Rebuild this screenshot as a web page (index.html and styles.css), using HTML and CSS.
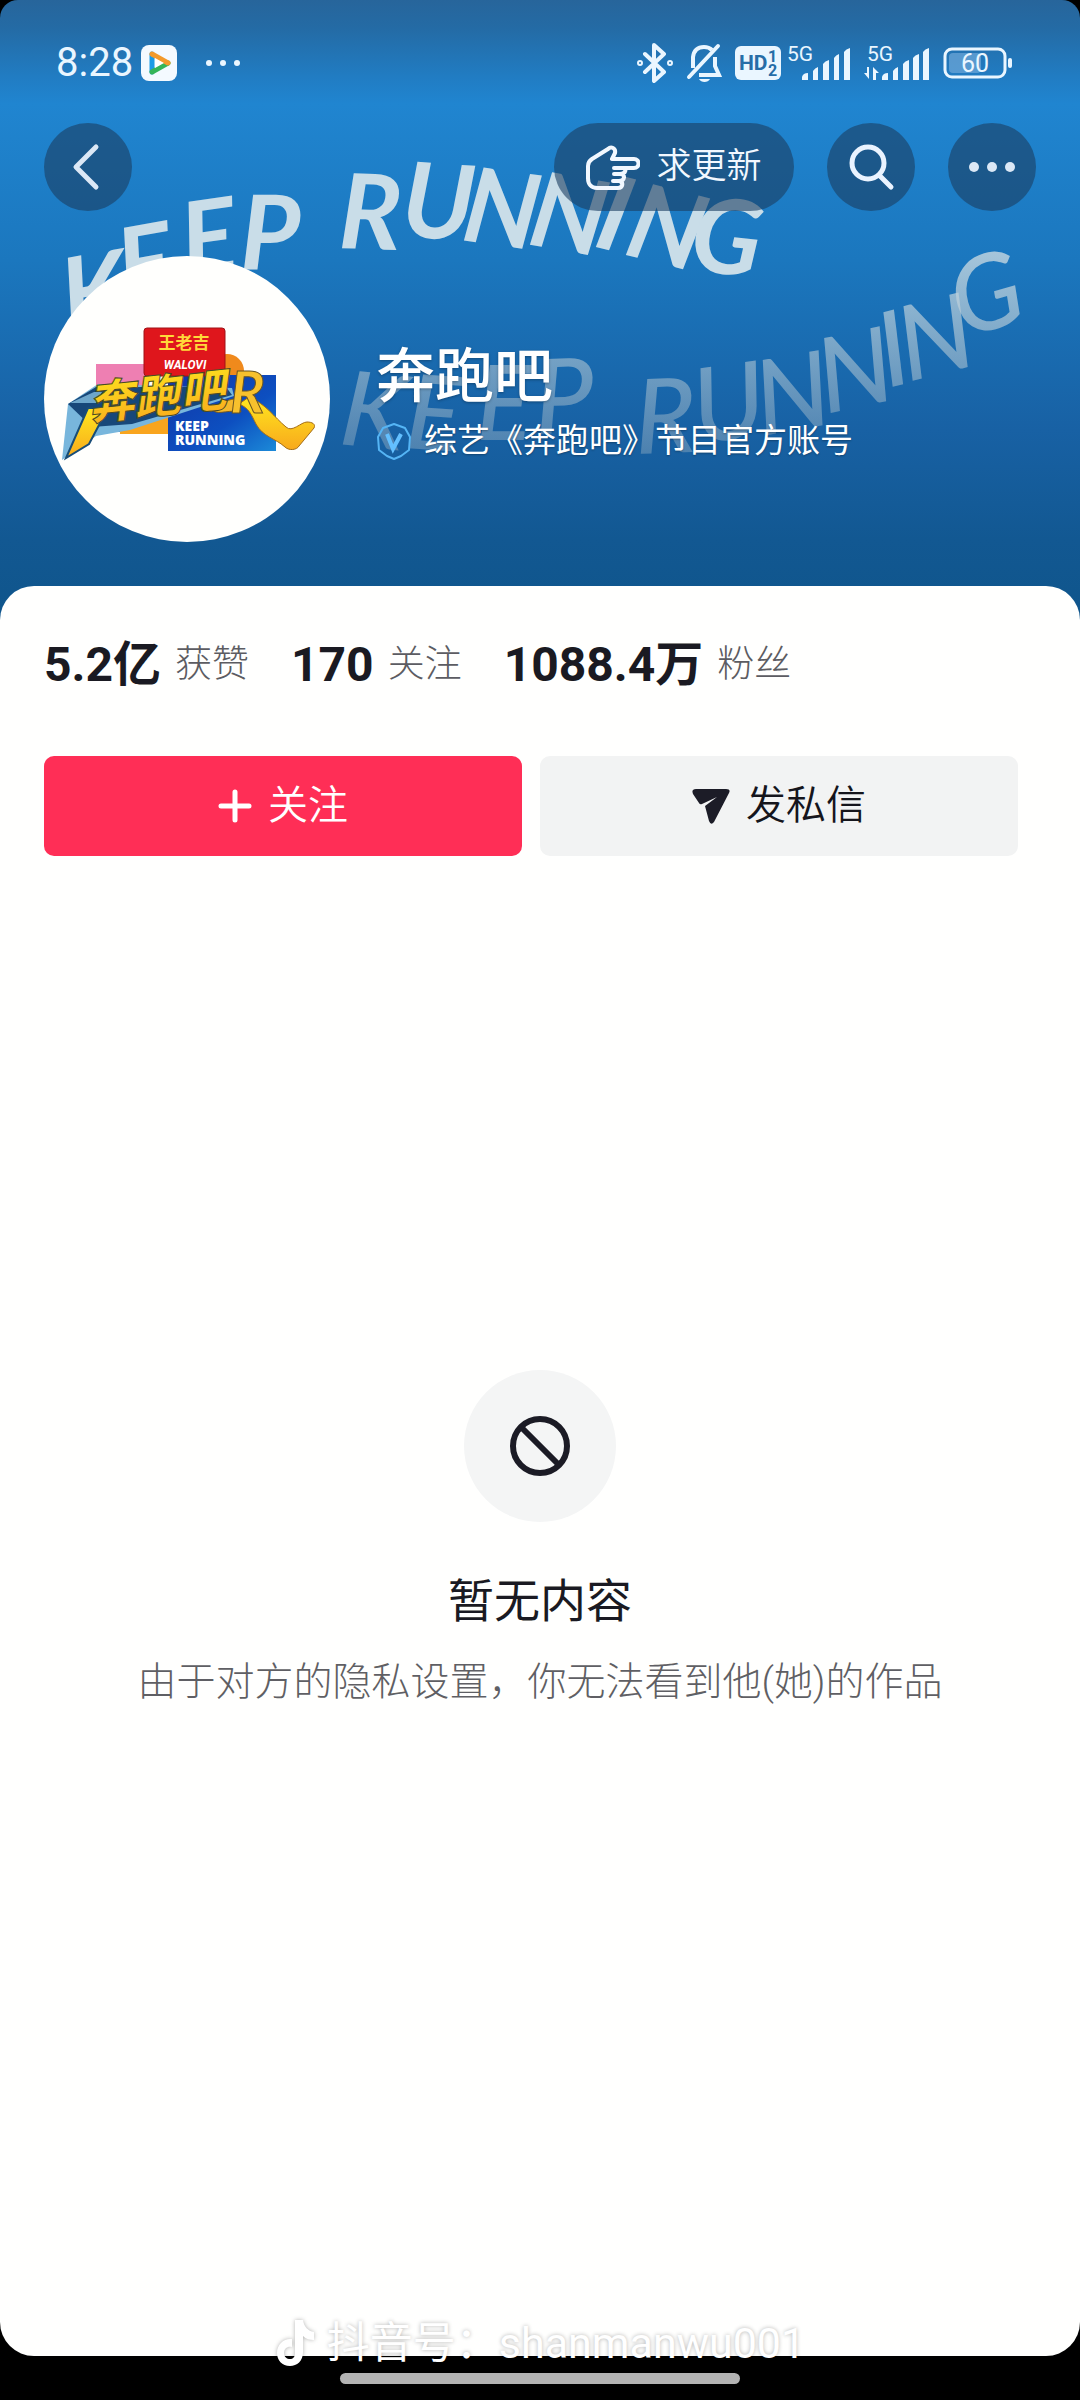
FILE: index.html
```html
<!DOCTYPE html>
<html lang="zh-CN">
<head>
  <meta charset="UTF-8">
  <meta name="viewport" content="width=device-width, initial-scale=1">
  <title>奔跑吧</title>
  <link rel="stylesheet" href="styles.css">
</head>
<body>

  <header class="cover">
    <!-- lettering on the cover photo -->
    <svg class="lettering" viewBox="0 0 1080 620" aria-hidden="true">
      <defs>
        <linearGradient id="fade" gradientUnits="userSpaceOnUse" x1="0" y1="240" x2="0" y2="460">
          <stop offset="0" stop-color="#c5d8e2" stop-opacity="0.85"/>
          <stop offset="1" stop-color="#a9bcc8" stop-opacity="0.35"/>
        </linearGradient>
      </defs>
      <text class="brush brush-top" x="68 124 186 240 338 400 460 526 592 622 688" y="334 304 278 270 248 236 240 244 246 254 270" rotate="-10 -10 -8 0 2 4 8 10 14 14 6">KEEPRUNNING</text>
      <text class="brush brush-low" x="338 404 476 536 636 698 762 826 888 908 962" y="444 448 440 434 454 444 436 414 388 382 338" rotate="6 4 0 -2 -2 -8 -10 -12 -14 -14 -16">KEEPRUNNING</text>
    </svg>

    <div class="status">
      <span class="time">8:28</span>
      <svg class="app" width="36" height="36" viewBox="0 0 36 36">
        <rect width="36" height="36" rx="8" fill="#f4faff"/>
        <path d="M11 9v18" stroke="#1c9be6" stroke-width="5" stroke-linecap="round"/>
        <path d="M11 27l16-9" stroke="#35b558" stroke-width="5" stroke-linecap="round"/>
        <path d="M11 9l16 9" stroke="#f39a2b" stroke-width="5" stroke-linecap="round"/>
        <path d="M14 13l9 5-9 5z" fill="#fff"/>
      </svg>
      <svg class="dots" width="36" height="8" viewBox="0 0 36 8" fill="#eaf6ff">
        <circle cx="4" cy="4" r="3"/><circle cx="18" cy="4" r="3"/><circle cx="32" cy="4" r="3"/>
      </svg>

      <div class="status-right">
        <svg width="36" height="40" viewBox="0 0 36 40" fill="none" stroke="#eaf6ff" stroke-width="4" stroke-linejoin="round" stroke-linecap="round">
          <path d="M8 11l19 18-10 9V2l10 9L8 29"/>
          <circle cx="3" cy="20" r="1"/><circle cx="33" cy="20" r="1"/>
        </svg>
        <svg width="36" height="40" viewBox="0 0 36 40" fill="none" stroke="#eaf6ff" stroke-width="4">
          <path d="M7 25V14C8 7 12 4 18 4c4 0 6 1 8 3M29 14v9l4 9H13"/>
          <path d="M3 34L32 3" stroke-linecap="round"/>
          <path d="M13 36h11c-2 4-9 4-11 0z" fill="#eaf6ff" stroke="none"/>
        </svg>
        <svg width="46" height="34" viewBox="0 0 46 34">
          <rect width="46" height="34" rx="6" fill="#eaf6ff"/>
          <text class="hd" x="4" y="24">HD</text>
          <text class="hd-num" x="33" y="16">1</text>
          <text class="hd-num" x="33" y="30">2</text>
        </svg>
        <svg class="signal" width="64" height="40" viewBox="0 -4 64 40" fill="#eaf6ff">
          <text class="net" x="0" y="14">5G</text>
          <path d="M15 33v-3q1-4 6-4v7zM26 33V24q2-3 5-4v13zM36 33V17q2-3 6-4v20zM47 33V11q2-3 5-4v26zM57 33V5q2-3 6-4v32z"/>
        </svg>
        <svg class="signal" width="66" height="40" viewBox="0 -4 66 40" fill="#eaf6ff">
          <text class="net" x="3" y="14">5G</text>
          <path d="M5 20v12L0 26h3v-6zM9 33V20l6 6h-3v7z"/>
          <path d="M18 33v-3q1-4 6-4v7zM29 33V24q2-3 5-4v13zM39 33V17q2-3 6-4v20zM49 33V11q2-3 6-4v26zM59 33V5q2-3 6-4v32z"/>
        </svg>
        <svg width="70" height="32" viewBox="0 0 70 32">
          <rect x="2" y="2" width="60" height="28" rx="7" fill="none" stroke="#eaf6ff" stroke-width="3"/>
          <rect x="6" y="6" width="32" height="20" rx="4" fill="#6fa8d8" opacity="0.7"/>
          <rect x="65" y="11" width="4" height="10" rx="2" fill="#eaf6ff"/>
          <text class="battery" x="32" y="25">60</text>
        </svg>
      </div>
    </div>

    <nav class="toolbar">
      <button class="round" aria-label="返回">
        <svg width="32" height="48" viewBox="0 0 32 48" fill="none" stroke="#dbe8f6" stroke-width="5" stroke-linecap="round" stroke-linejoin="round">
          <path d="M24 4L4 24l20 20"/>
        </svg>
      </button>
      <button class="pill">
        <svg width="54" height="46" viewBox="0 0 54 46" fill="none" stroke="#f2f8ff" stroke-width="4" stroke-linejoin="round" stroke-linecap="round">
          <path d="M26 15h22c6 0 6 9 0 9H28M26 15l3-6c1-5-4-7-7-4L6 15c-3 2-4 4-4 7v12c0 6 3 10 9 10h21c5 0 6-6 1-7 6 0 7-7 1-7 6 0 7-6 3-6M28 30h7M27 37h7"/>
        </svg>
        求更新
      </button>
      <button class="round" aria-label="搜索">
        <svg width="48" height="48" viewBox="0 0 48 48" fill="none" stroke="#eaf3ff" stroke-width="5" stroke-linecap="round">
          <circle cx="21" cy="20" r="16"/><path d="M33 33l11 11"/>
        </svg>
      </button>
      <button class="round" aria-label="更多">
        <svg width="48" height="12" viewBox="0 0 48 12" fill="#dbe8f6">
          <circle cx="6" cy="6" r="5"/><circle cx="24" cy="6" r="5"/><circle cx="42" cy="6" r="5"/>
        </svg>
      </button>
    </nav>

    <div class="profile">
      <svg class="avatar" viewBox="0 0 286 286" role="img" aria-label="奔跑吧">
        <defs>
          <linearGradient id="gold" x1="0" y1="0" x2="0" y2="1">
            <stop offset="0" stop-color="#ffe81f"/>
            <stop offset="1" stop-color="#f8a91c"/>
          </linearGradient>
          <linearGradient id="blue" x1="0" y1="0" x2="1" y2="1">
            <stop offset="0" stop-color="#1236a5"/>
            <stop offset="0.6" stop-color="#0d4fc0"/>
            <stop offset="1" stop-color="#1c8ad8"/>
          </linearGradient>
        </defs>
        <circle cx="143" cy="143" r="143" fill="#fffffd"/>
        <circle cx="183" cy="115" r="17" fill="#f08a1c"/>
        <path d="M52 108h50v34H52z" fill="#ee7fb2"/>
        <path d="M52 140h74v36H48z" fill="#1b4c9e"/>
        <path d="M76 164l48-12v26H76z" fill="#f9a51d"/>
        <path d="M124 119h108v76H124z" fill="url(#blue)"/>
        <rect x="100" y="72" width="81" height="48" rx="3" fill="#df161c" stroke="#a01216"/>
        <text class="logo-brand" x="140" y="93">王老吉</text>
        <text class="logo-walovi" x="141" y="113">WALOVI</text>
        <path d="M24 148l30-20 134 4 2 8-104 34-34 6-34 24z" fill="#78b6dc"/>
        <path d="M24 148l28-17h130l6 8-100 29-40 3z" fill="#174779"/>
        <path d="M26 147l24-11h8l-6 11z" fill="#6da6cb"/>
        <path d="M44 152h20l-19 36-23 14z" fill="url(#gold)" stroke="#184d78" stroke-width="2"/>
        <path d="M205 141c17 7 25 20 37 30 6 6 15-5 21-5 5 0 9 2 7 6l-15 18c-2 4-10 5-14 1-10-9-22-10-29-23-5-10-7-16-17-20z" fill="url(#gold)" stroke="#a46d17"/>
        <path d="M194 143c-8-1-18 4-24 12 4 4 18-2 27 1z" fill="#f5b82c" stroke="#795b20"/>
        <text class="logo-name" x="46" y="164" transform="rotate(-6 46 164)">奔跑吧</text>
        <text class="logo-r" x="186" y="157">R</text>
        <text class="logo-en" x="131" y="175">KEEP</text>
        <text class="logo-en" x="131" y="189">RUNNING</text>
      </svg>
      <div class="who">
        <h1>奔跑吧</h1>
        <p class="verify">
          <svg width="36" height="38" viewBox="0 0 36 38" fill="none" stroke="#55b5f5">
            <path d="M18 2l11 4 5 9-1 13-8 6-7 3-7-3-8-6-1-13 5-9z" stroke-width="2" stroke-linejoin="round"/>
            <path d="M11 12l6 15 8-15" stroke="#63c0ff" stroke-width="4"/>
          </svg>
          综艺《奔跑吧》节目官方账号
        </p>
      </div>
    </div>
  </header>

  <main class="panel">
    <div class="stats">
      <a href="#" class="stat"><strong>5.2亿</strong><span>获赞</span></a>
      <a href="#" class="stat"><strong>170</strong><span>关注</span></a>
      <a href="#" class="stat"><strong>1088.4万</strong><span>粉丝</span></a>
    </div>

    <div class="actions">
      <button class="btn btn-follow">
        <svg width="34" height="34" viewBox="0 0 34 34" stroke="#fff" stroke-width="5" stroke-linecap="round">
          <path d="M17 3v28M3 17h28"/>
        </svg>
        关注
      </button>
      <button class="btn btn-message">
        <svg width="38" height="36" viewBox="0 0 38 36" fill="#1c1c27">
          <path d="M4 1h30q5 0 3 4L22 34q-3 4-5-1l-4-15 12-9-15 7q-2 1-3-1L1 6Q-1 1 4 1z"/>
        </svg>
        发私信
      </button>
    </div>

    <section class="empty">
      <div class="empty-icon">
        <svg width="62" height="62" viewBox="0 0 62 62" fill="none" stroke="#1b1b25" stroke-width="6">
          <circle cx="31" cy="31" r="27"/><path d="M12 12l38 38"/>
        </svg>
      </div>
      <h2>暂无内容</h2>
      <p>由于对方的隐私设置，你无法看到他(她)的作品</p>
    </section>
  </main>

  <footer class="homebar">
    <div class="watermark">
      <svg width="40" height="48" viewBox="0 0 40 48" fill="#fff">
        <path d="M20 1h8c1 7 5 11 11 12v8c-4 0-8-1-11-4v16c0 9-6 14-13 14C7 47 2 41 2 34c0-9 7-15 15-14v8c-5-1-8 2-8 6s3 6 6 6 5-2 5-6z"/>
      </svg>
      <span>抖音号：shanmanwu001</span>
    </div>
    <div class="indicator"></div>
  </footer>

</body>
</html>
```
FILE: styles.css
```css
body {
  margin: 0;
  min-height: 100vh;
  display: flex;
  flex-direction: column;
  background: #000;
  color: #1a1a22;
  font-family: Roboto, "Noto Sans CJK SC", sans-serif;
}
h1, h2, p {
  margin: 0;
  font-weight: 400;
}
svg {
  flex: none;
  display: block;
}
button {
  display: flex;
  align-items: center;
  justify-content: center;
  padding: 0;
  border: none;
  font-family: inherit;
  cursor: pointer;
}

/* cover */
.cover {
  position: relative;
  padding: 40px 44px 78px;
  border-radius: 18px 18px 0 0;
  overflow: hidden;
  background: linear-gradient(#27659b 0, #246ba5 28px, #217cc2 76px, #2085d0 104px, #1b77be 260px, #1861a4 430px, #125892 540px, #0f558b 620px);
  color: #fff;
}
.lettering {
  position: absolute;
  top: 0;
  left: 0;
  width: 100%;
}
.brush {
  font-family: Lato, sans-serif;
  font-style: italic;
}
.brush-top {
  font-size: 104px;
  font-weight: 700;
  fill: #c9dde8;
}
.brush-low {
  font-size: 104px;
  font-weight: 500;
  fill: url(#fade);
}

.status {
  position: relative;
  display: flex;
  align-items: center;
  height: 46px;
  padding: 0 23px 0 12px;
  color: #eaf6ff;
}
.time {
  font-size: 40px;
  line-height: 46px;
}
.app {
  margin-left: 8px;
}
.dots {
  margin-left: 28px;
}
.status-right {
  display: flex;
  align-items: center;
  gap: 13px;
  margin-left: auto;
}
.status-right svg:nth-child(4) {
  margin-left: -7px;
}
.signal {
  overflow: visible;
}
.hd {
  font: bold 21px Roboto, sans-serif;
  fill: #266da7;
}
.hd-num {
  font: bold 16px Roboto, sans-serif;
  fill: #266da7;
}
.net {
  font: 21px Roboto, sans-serif;
}
.battery {
  font: 25px Roboto, sans-serif;
  fill: #eaf6ff;
  text-anchor: middle;
}

.toolbar {
  position: relative;
  display: flex;
  gap: 33px;
  margin-top: 37px;
}
.round, .pill {
  height: 88px;
  border-radius: 44px;
  background: rgba(26, 62, 97, 0.6);
  color: #f2f8ff;
}
.round {
  width: 88px;
}
.pill {
  width: 240px;
  gap: 16px;
  margin-left: auto;
  font-size: 35px;
  font-weight: 350;
  line-height: 48px;
}

.profile {
  position: relative;
  display: flex;
  align-items: center;
  gap: 46px;
  margin-top: 45px;
}
.avatar {
  width: 286px;
  height: 286px;
}
.logo-brand {
  font: bold 17px "Noto Sans CJK SC", sans-serif;
  fill: #ffd83a;
  text-anchor: middle;
}
.logo-walovi {
  font: italic bold 12px Roboto, sans-serif;
  fill: #fff;
  text-anchor: middle;
}
.logo-name {
  font: italic 900 46px "Noto Sans CJK SC", sans-serif;
  fill: url(#gold);
  stroke: #4b4a24;
  stroke-width: 1;
}
.logo-r {
  font: italic bold 58px Lato, sans-serif;
  fill: #f8c12d;
  stroke: #6a5523;
  stroke-width: 1;
}
.logo-en {
  font: 800 14px "Open Sans", sans-serif;
  fill: #fff;
}
.who {
  padding-top: 8px;
}
.who h1 {
  font-size: 59px;
  font-weight: 500;
  line-height: 76px;
  text-shadow: 0 1px 3px rgba(0, 0, 0, 0.3);
}
.verify {
  display: flex;
  align-items: center;
  gap: 12px;
  font-size: 33px;
  line-height: 52px;
  text-shadow: 0 1px 2px rgba(0, 0, 0, 0.3);
}

/* white sheet over the cover */
.panel {
  position: relative;
  flex: 1;
  margin-top: -34px;
  padding: 44px 62px 44px 44px;
  border-radius: 34px;
  background: #fffffe;
}
.stats {
  display: flex;
  gap: 42px;
  height: 70px;
  align-items: center;
}
.stat {
  display: flex;
  align-items: center;
  gap: 14px;
  color: inherit;
  text-decoration: none;
}
.stat strong {
  font-size: 48px;
  line-height: 70px;
  font-weight: 700;
}
.stat span {
  font-size: 37px;
  font-weight: 300;
  line-height: 70px;
  color: #5c5c62;
}
.actions {
  display: flex;
  gap: 18px;
  margin-top: 56px;
}
.btn {
  flex: 1;
  height: 100px;
  gap: 16px;
  border-radius: 10px;
  font-size: 40px;
  font-weight: 350;
  line-height: 56px;
}
.btn-follow {
  background: #ff2e56;
  color: #fff;
}
.btn-message {
  background: #f2f3f3;
  color: #15151c;
}
.empty {
  display: flex;
  flex-direction: column;
  align-items: center;
  margin: 514px -18px 0 0;
  text-align: center;
}
.empty-icon {
  display: flex;
  align-items: center;
  justify-content: center;
  width: 152px;
  height: 152px;
  border-radius: 50%;
  background: #f4f5f5;
}
.empty h2 {
  margin-top: 44px;
  font-size: 46px;
  line-height: 70px;
}
.empty p {
  margin-top: 18px;
  font-size: 39px;
  line-height: 56px;
  font-weight: 300;
  color: #5f5f64;
}

/* system bar */
.homebar {
  position: relative;
  display: flex;
  justify-content: center;
  height: 27px;
  padding-top: 17px;
}
.indicator {
  width: 37%;
  height: 11px;
  border-radius: 6px;
  background: #b3b3b3;
}
.watermark {
  position: absolute;
  bottom: 29px;
  display: flex;
  align-items: center;
  gap: 12px;
  font-size: 43px;
  line-height: 56px;
  color: #fff;
  white-space: nowrap;
  text-shadow: 0 0 4px rgba(0, 0, 0, 0.3);
}
.watermark svg {
  filter: drop-shadow(0 0 2px rgba(0, 0, 0, 0.3));
}
```
